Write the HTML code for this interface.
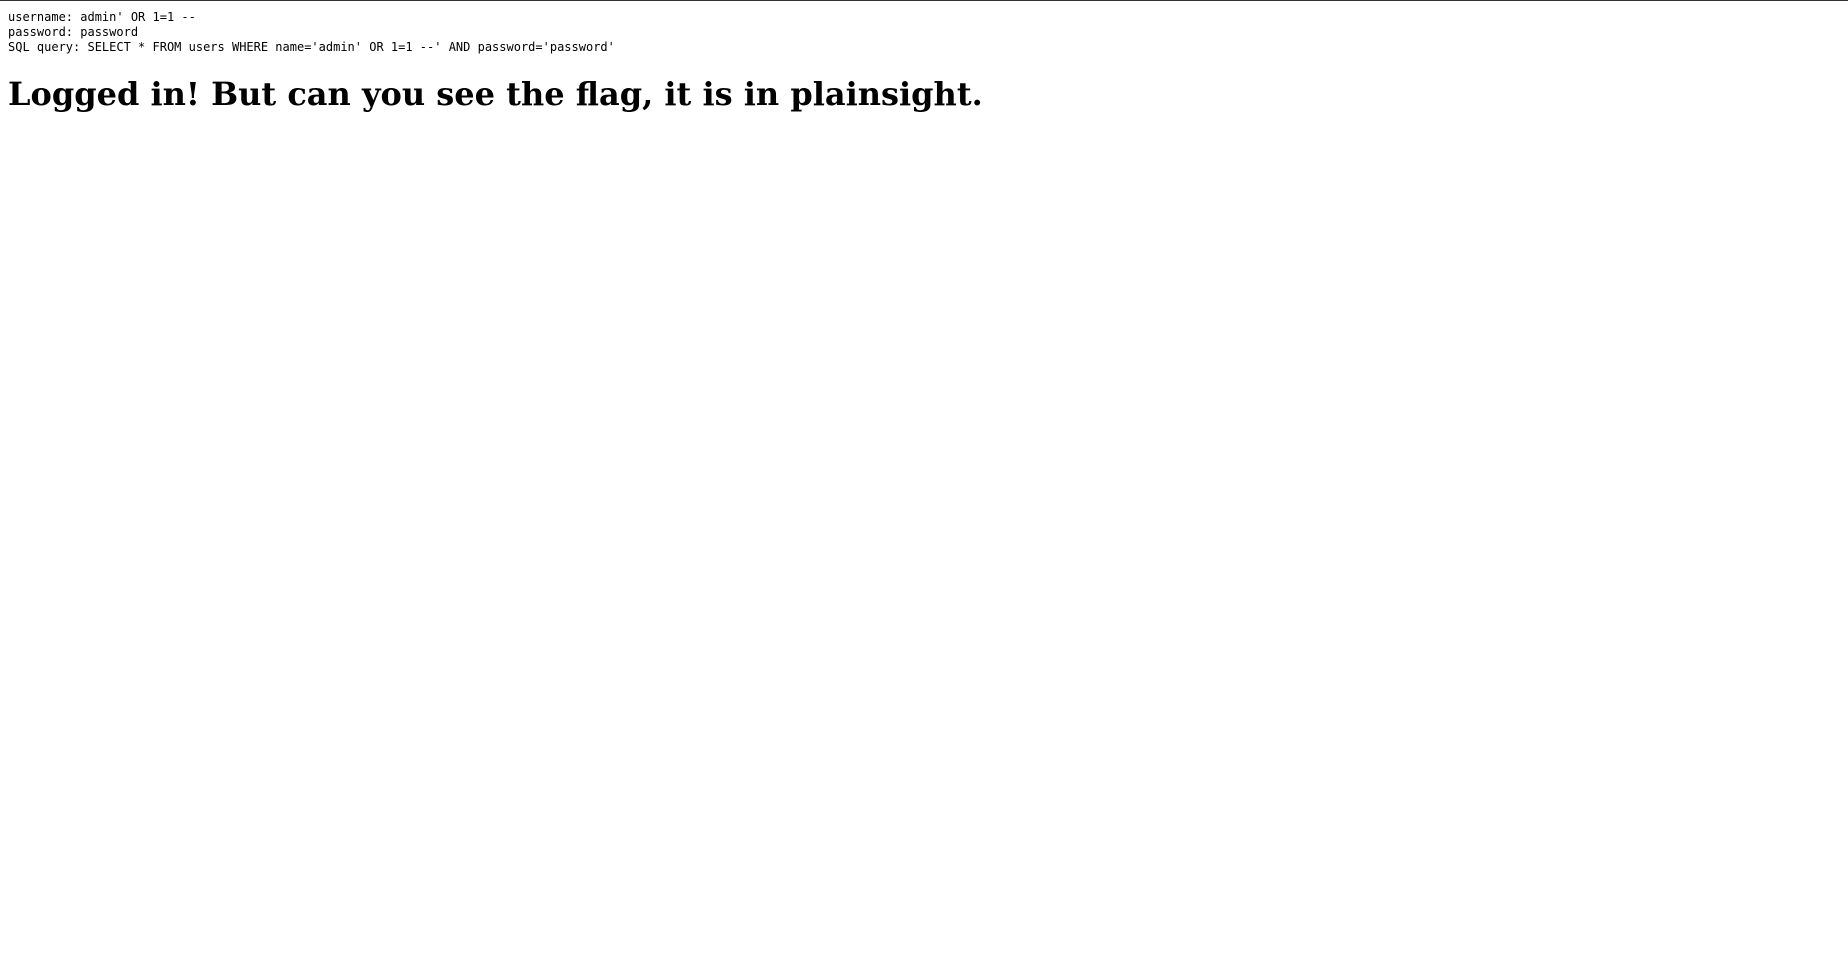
<!DOCTYPE html>
<html><head><meta charset="utf-8"><style>
html,body{margin:0;padding:0;background:#fff;width:1848px;height:977px;overflow:hidden}
.top{position:absolute;left:0;top:0;width:1848px;height:1px;background:#333}
pre{position:absolute;left:8px;top:10px;margin:0;font-family:"DejaVu Sans Mono","Liberation Mono",monospace;font-size:12px;line-height:15px;color:#000}
h1{position:absolute;left:8px;top:74px;margin:0;font-family:"DejaVu Serif","Liberation Serif",serif;font-weight:bold;font-size:32px;line-height:40px;color:#000;white-space:nowrap}
</style></head><body>
<div class="top"></div>
<pre>username: admin' OR 1=1 --
password: password
SQL query: SELECT * FROM users WHERE name='admin' OR 1=1 --' AND password='password'</pre>
<h1>Logged in! But can you see the flag, it is in plainsight.</h1>
</body></html>
